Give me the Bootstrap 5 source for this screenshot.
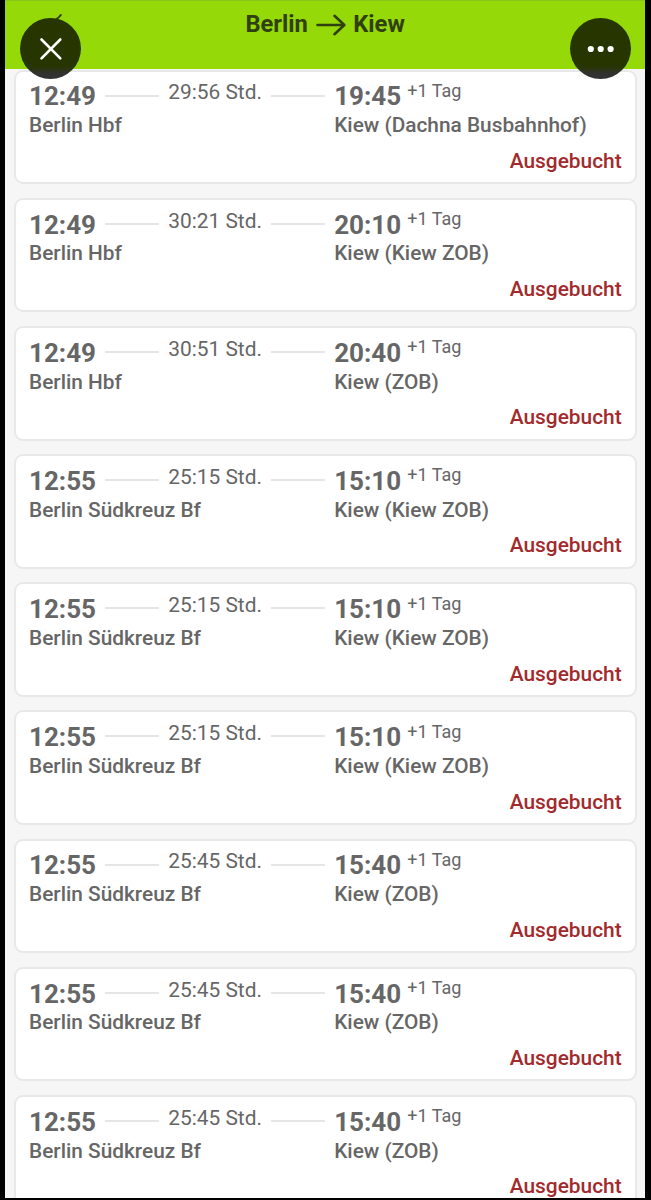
<!DOCTYPE html>
<html lang="de">
<head>
<meta charset="utf-8">
<meta name="viewport" content="width=device-width, initial-scale=1">
<title>Berlin → Kiew</title>
<link href="https://cdn.jsdelivr.net/npm/bootstrap@5.3.0/dist/css/bootstrap.min.css" rel="stylesheet">
<style>
body{background:#000;font-family:Roboto,sans-serif;color:#666;height:1200px;overflow:hidden}
.screen{margin:0 6px 0 5px;height:1197.5px;background:#f6f6f6}
.topbar{height:69px;background:#96d908;border-top:1px solid #8ac51b;color:#30400c;z-index:2}
.route{font-size:23.7px;font-weight:700;line-height:28px;margin-top:8.5px;padding-left:240.4px}
.route svg{margin:2px 7.5px 0 8px}
.back-arrow{position:absolute;left:51px;top:12px}
.round{position:absolute;top:17px;width:61px;height:61px;border:0;background:linear-gradient(#273600 48px,#323232 56px)}
.round svg{display:block}
.close-btn{left:15px}
.more-btn{right:14.5px}
.trips{padding:.7px 8.5px 0 9px}
.trip{height:114.5px;margin-bottom:13.67px;border:2px solid #e8e8e8;border-radius:9px;background:#fff;padding:9.8px 12.8px 0 13px;color:inherit}
.leg-from{width:305.2px}
.leg-top{height:29.8px;line-height:30px}
.time{font-size:26px;font-weight:700;width:76.2px}
.dash{width:54px;height:2px;background:#e6e6e6;margin-top:13.1px}
.dur{font-size:20.9px;width:112px;padding-left:9px;margin-top:-4px}
.plus{font-size:18px;margin-top:-5.6px}
.leg-to .time{width:73px}
.stop{font-size:20.83px;font-weight:500;line-height:28px}
.status{font-size:20.9px;font-weight:500;line-height:28px;margin-top:7.6px;color:#a22a2c}
</style>
</head>
<body>
<div class="screen overflow-hidden">
<header class="topbar position-relative">
  <div class="d-flex"><div class="route d-flex align-items-center text-nowrap"><span>Berlin</span><svg width="30" height="22" viewBox="0 0 30 22" fill="none" stroke="currentColor" stroke-width="2.6" stroke-linecap="round" stroke-linejoin="round"><path d="M1.5 11H28M18.5 1.8L28.3 11L18.5 20.2"/></svg><span>Kiew</span></div></div>
  <svg class="back-arrow" width="8" height="8" viewBox="0 0 8 8" fill="none" stroke="currentColor" stroke-width="2" stroke-linecap="round"><path d="M0 6.5Q3 4.5 4.8 2"/></svg>
  <button class="round close-btn rounded-circle p-0" aria-label="Schließen"><svg width="61" height="61" viewBox="0 0 61 61" stroke="#fff" stroke-width="2.6" stroke-linecap="round"><path d="M21.5 21.5L40.3 40.3M40.3 21.5L21.5 40.3"/></svg></button>
  <button class="round more-btn rounded-circle p-0" aria-label="Mehr"><svg width="61" height="61" viewBox="0 0 61 61" fill="#fff"><circle cx="20.8" cy="31" r="3.1"/><circle cx="30.7" cy="31" r="3.1"/><circle cx="40.6" cy="31" r="3.1"/></svg></button>
</header>
<main class="trips" id="trips"></main>
</div>
<template id="trip-tpl">
  <article class="trip card">
    <div class="d-flex text-nowrap">
      <div class="leg-from">
        <div class="leg-top d-flex"><span class="time dep"></span><span class="dash"></span><span class="dur"></span><span class="dash"></span></div>
        <div class="stop origin"></div>
      </div>
      <div class="leg-to">
        <div class="leg-top d-flex"><span class="time arr"></span><span class="plus">+1 Tag</span></div>
        <div class="stop dest"></div>
      </div>
    </div>
    <div class="status text-end">Ausgebucht</div>
  </article>
</template>
<script src="https://cdn.jsdelivr.net/npm/bootstrap@5.3.0/dist/js/bootstrap.bundle.min.js"></script>
<script>
const trips = [
  ['12:49','Berlin Hbf','29:56','19:45','Kiew (Dachna Busbahnhof)'],
  ['12:49','Berlin Hbf','30:21','20:10','Kiew (Kiew ZOB)'],
  ['12:49','Berlin Hbf','30:51','20:40','Kiew (ZOB)'],
  ['12:55','Berlin Südkreuz Bf','25:15','15:10','Kiew (Kiew ZOB)'],
  ['12:55','Berlin Südkreuz Bf','25:15','15:10','Kiew (Kiew ZOB)'],
  ['12:55','Berlin Südkreuz Bf','25:15','15:10','Kiew (Kiew ZOB)'],
  ['12:55','Berlin Südkreuz Bf','25:45','15:40','Kiew (ZOB)'],
  ['12:55','Berlin Südkreuz Bf','25:45','15:40','Kiew (ZOB)'],
  ['12:55','Berlin Südkreuz Bf','25:45','15:40','Kiew (ZOB)']
];
const tpl = document.getElementById('trip-tpl');
for (const [dep, origin, dur, arr, dest] of trips) {
  const n = tpl.content.cloneNode(true);
  n.querySelector('.dep').textContent = dep;
  n.querySelector('.origin').textContent = origin;
  n.querySelector('.dur').textContent = dur + ' Std.';
  n.querySelector('.arr').textContent = arr;
  n.querySelector('.dest').textContent = dest;
  document.getElementById('trips').append(n);
}
</script>
</body>
</html>
